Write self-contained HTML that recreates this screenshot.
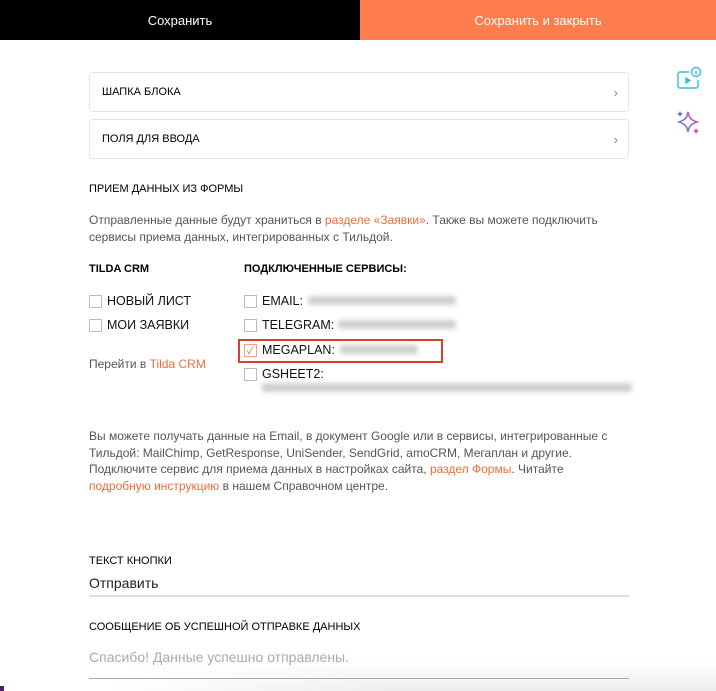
<!DOCTYPE html>
<html><head><meta charset="utf-8"><style>
*{margin:0;padding:0;box-sizing:border-box}
body{width:716px;height:691px;overflow:hidden;background:#fff;font-family:"Liberation Sans","Noto Sans CJK SC",sans-serif;color:#000;position:relative}
.a{position:absolute;white-space:nowrap}
.top{position:absolute;top:0;height:40px;color:#fff;font-size:13px;display:flex;align-items:center;justify-content:center}
.box{position:absolute;left:89px;width:540px;height:40px;border:1px solid #e6e6e6;border-radius:3px;font-size:11px;padding-left:12px;line-height:39px}
.box span{position:absolute;right:10px;top:0;color:#888;font-size:13px}
.p{color:#555;font-size:12px;line-height:16.5px}
.o{color:#f26b3a}
.cb{position:absolute;width:13px;height:13px;border:1px solid #bbb;background:#fff}
.lbl{font-size:12.5px;color:#111}
.blur{position:absolute;height:9px;background:#cfcfcf;filter:blur(2.5px);border-radius:3px}
</style></head><body>
<div class="top" style="left:0;width:360px;background:#000">Сохранить</div>
<div class="top" style="left:360px;width:356px;background:#ff7c4d">Сохранить и закрыть</div>

<svg class="a" style="left:676px;top:66px" width="26" height="26" viewBox="0 0 26 26" fill="none" stroke="#36bde0" stroke-width="1.4"><path d="M13 6H4a2 2 0 0 0-2 2v12a2 2 0 0 0 2 2h16a2 2 0 0 0 2-2v-6"/><path d="M10 12v5l4-2.5z" fill="#36bde0"/><circle cx="20" cy="6" r="4.5"/><path d="M20 5v3.5M20 3.3v.2"/></svg>
<svg class="a" style="left:674px;top:108px" width="28" height="28" viewBox="0 0 28 28"><defs><linearGradient id="g" x1="0" y1="1" x2="1" y2="0"><stop offset="0" stop-color="#36bde0"/><stop offset=".5" stop-color="#8a5ce0"/><stop offset="1" stop-color="#f0506e"/></linearGradient></defs><path d="M14 4C15 10 17 12 23 14C17 16 15 18 14 24C13 18 11 16 5 14C11 12 13 10 14 4Z" fill="none" stroke="url(#g)" stroke-width="1.6"/><path d="M6 3l1 2 2 1-2 1-1 2-1-2-2-1 2-1z" fill="#6a6ae0"/><path d="M22 20l1 2 2 1-2 1-1 2-1-2-2-1 2-1z" fill="#c050c0"/></svg>

<div class="box" style="top:72px">ШАПКА БЛОКА<span>›</span></div>
<div class="box" style="top:119px">ПОЛЯ ДЛЯ ВВОДА<span>›</span></div>

<div class="a" style="left:89px;top:183px;font-size:11px">ПРИЕМ ДАННЫХ ИЗ ФОРМЫ</div>
<div class="a p" style="left:89px;top:212px">Отправленные данные будут храниться в <span class="o">разделе «Заявки»</span>. Также вы можете подключить<br>сервисы приема данных, интегрированных с Тильдой.</div>

<div class="a" style="left:89px;top:263px;font-size:11px;font-weight:bold">TILDA CRM</div>
<div class="a" style="left:244px;top:263px;font-size:11px;font-weight:bold">ПОДКЛЮЧЕННЫЕ СЕРВИСЫ:</div>

<div class="cb" style="left:89px;top:295px"></div><div class="a lbl" style="left:107px;top:294px">НОВЫЙ ЛИСТ</div>
<div class="cb" style="left:89px;top:319px"></div><div class="a lbl" style="left:107px;top:318px">МОИ ЗАЯВКИ</div>
<div class="a p" style="left:89px;top:356px">Перейти в <span class="o">Tilda CRM</span></div>

<div class="cb" style="left:244px;top:295px"></div><div class="a lbl" style="left:262px;top:294px">EMAIL:</div><div class="blur" style="left:308px;top:296px;width:148px"></div>
<div class="cb" style="left:244px;top:319px"></div><div class="a lbl" style="left:262px;top:318px">TELEGRAM:</div><div class="blur" style="left:338px;top:320px;width:118px"></div>
<div class="a" style="left:238px;top:339px;width:205px;height:24px;border:2px solid #d9402b"></div>
<div class="cb" style="left:244px;top:344px;border-color:#f4a080"></div><div class="a" style="left:247px;top:342px;color:#f26b3a;font-size:10px">✓</div>
<div class="a lbl" style="left:262px;top:343px">MEGAPLAN:</div><div class="blur" style="left:340px;top:345px;width:78px"></div>
<div class="cb" style="left:244px;top:368px"></div><div class="a lbl" style="left:262px;top:367px">GSHEET2:</div>
<div class="blur" style="left:262px;top:383px;width:370px"></div>

<div class="a p" style="left:89px;top:428px">Вы можете получать данные на Email, в документ Google или в сервисы, интегрированные с<br>Тильдой: MailChimp, GetResponse, UniSender, SendGrid, amoCRM, Мегаплан и другие.<br>Подключите сервис для приема данных в настройках сайта, <span class="o">раздел Формы</span>. Читайте<br><span class="o">подробную инструкцию</span> в нашем Справочном центре.</div>

<div class="a" style="left:89px;top:555px;font-size:11px">ТЕКСТ КНОПКИ</div>
<div class="a" style="left:89px;top:575px;font-size:14px;color:#222">Отправить</div>
<div class="a" style="left:89px;top:595px;width:540px;height:2px;background:#e0e0e0"></div>

<div class="a" style="left:89px;top:621px;font-size:11px">СООБЩЕНИЕ ОБ УСПЕШНОЙ ОТПРАВКЕ ДАННЫХ</div>
<div class="a" style="left:89px;top:649px;font-size:14px;color:#aaa">Спасибо! Данные успешно отправлены.</div>
<div class="a" style="left:0;top:660px;width:716px;height:31px;background:linear-gradient(to bottom,rgba(0,0,0,0),rgba(0,0,0,.07));-webkit-mask-image:linear-gradient(to right,transparent 15%,#000 55%);mask-image:linear-gradient(to right,transparent 15%,#000 55%)"></div>
<div class="a" style="left:89px;top:678px;width:540px;height:1px;background:#aaa"></div>
<div class="a" style="left:0;top:686px;width:4px;height:5px;background:#4a1f6e"></div>
</body></html>
